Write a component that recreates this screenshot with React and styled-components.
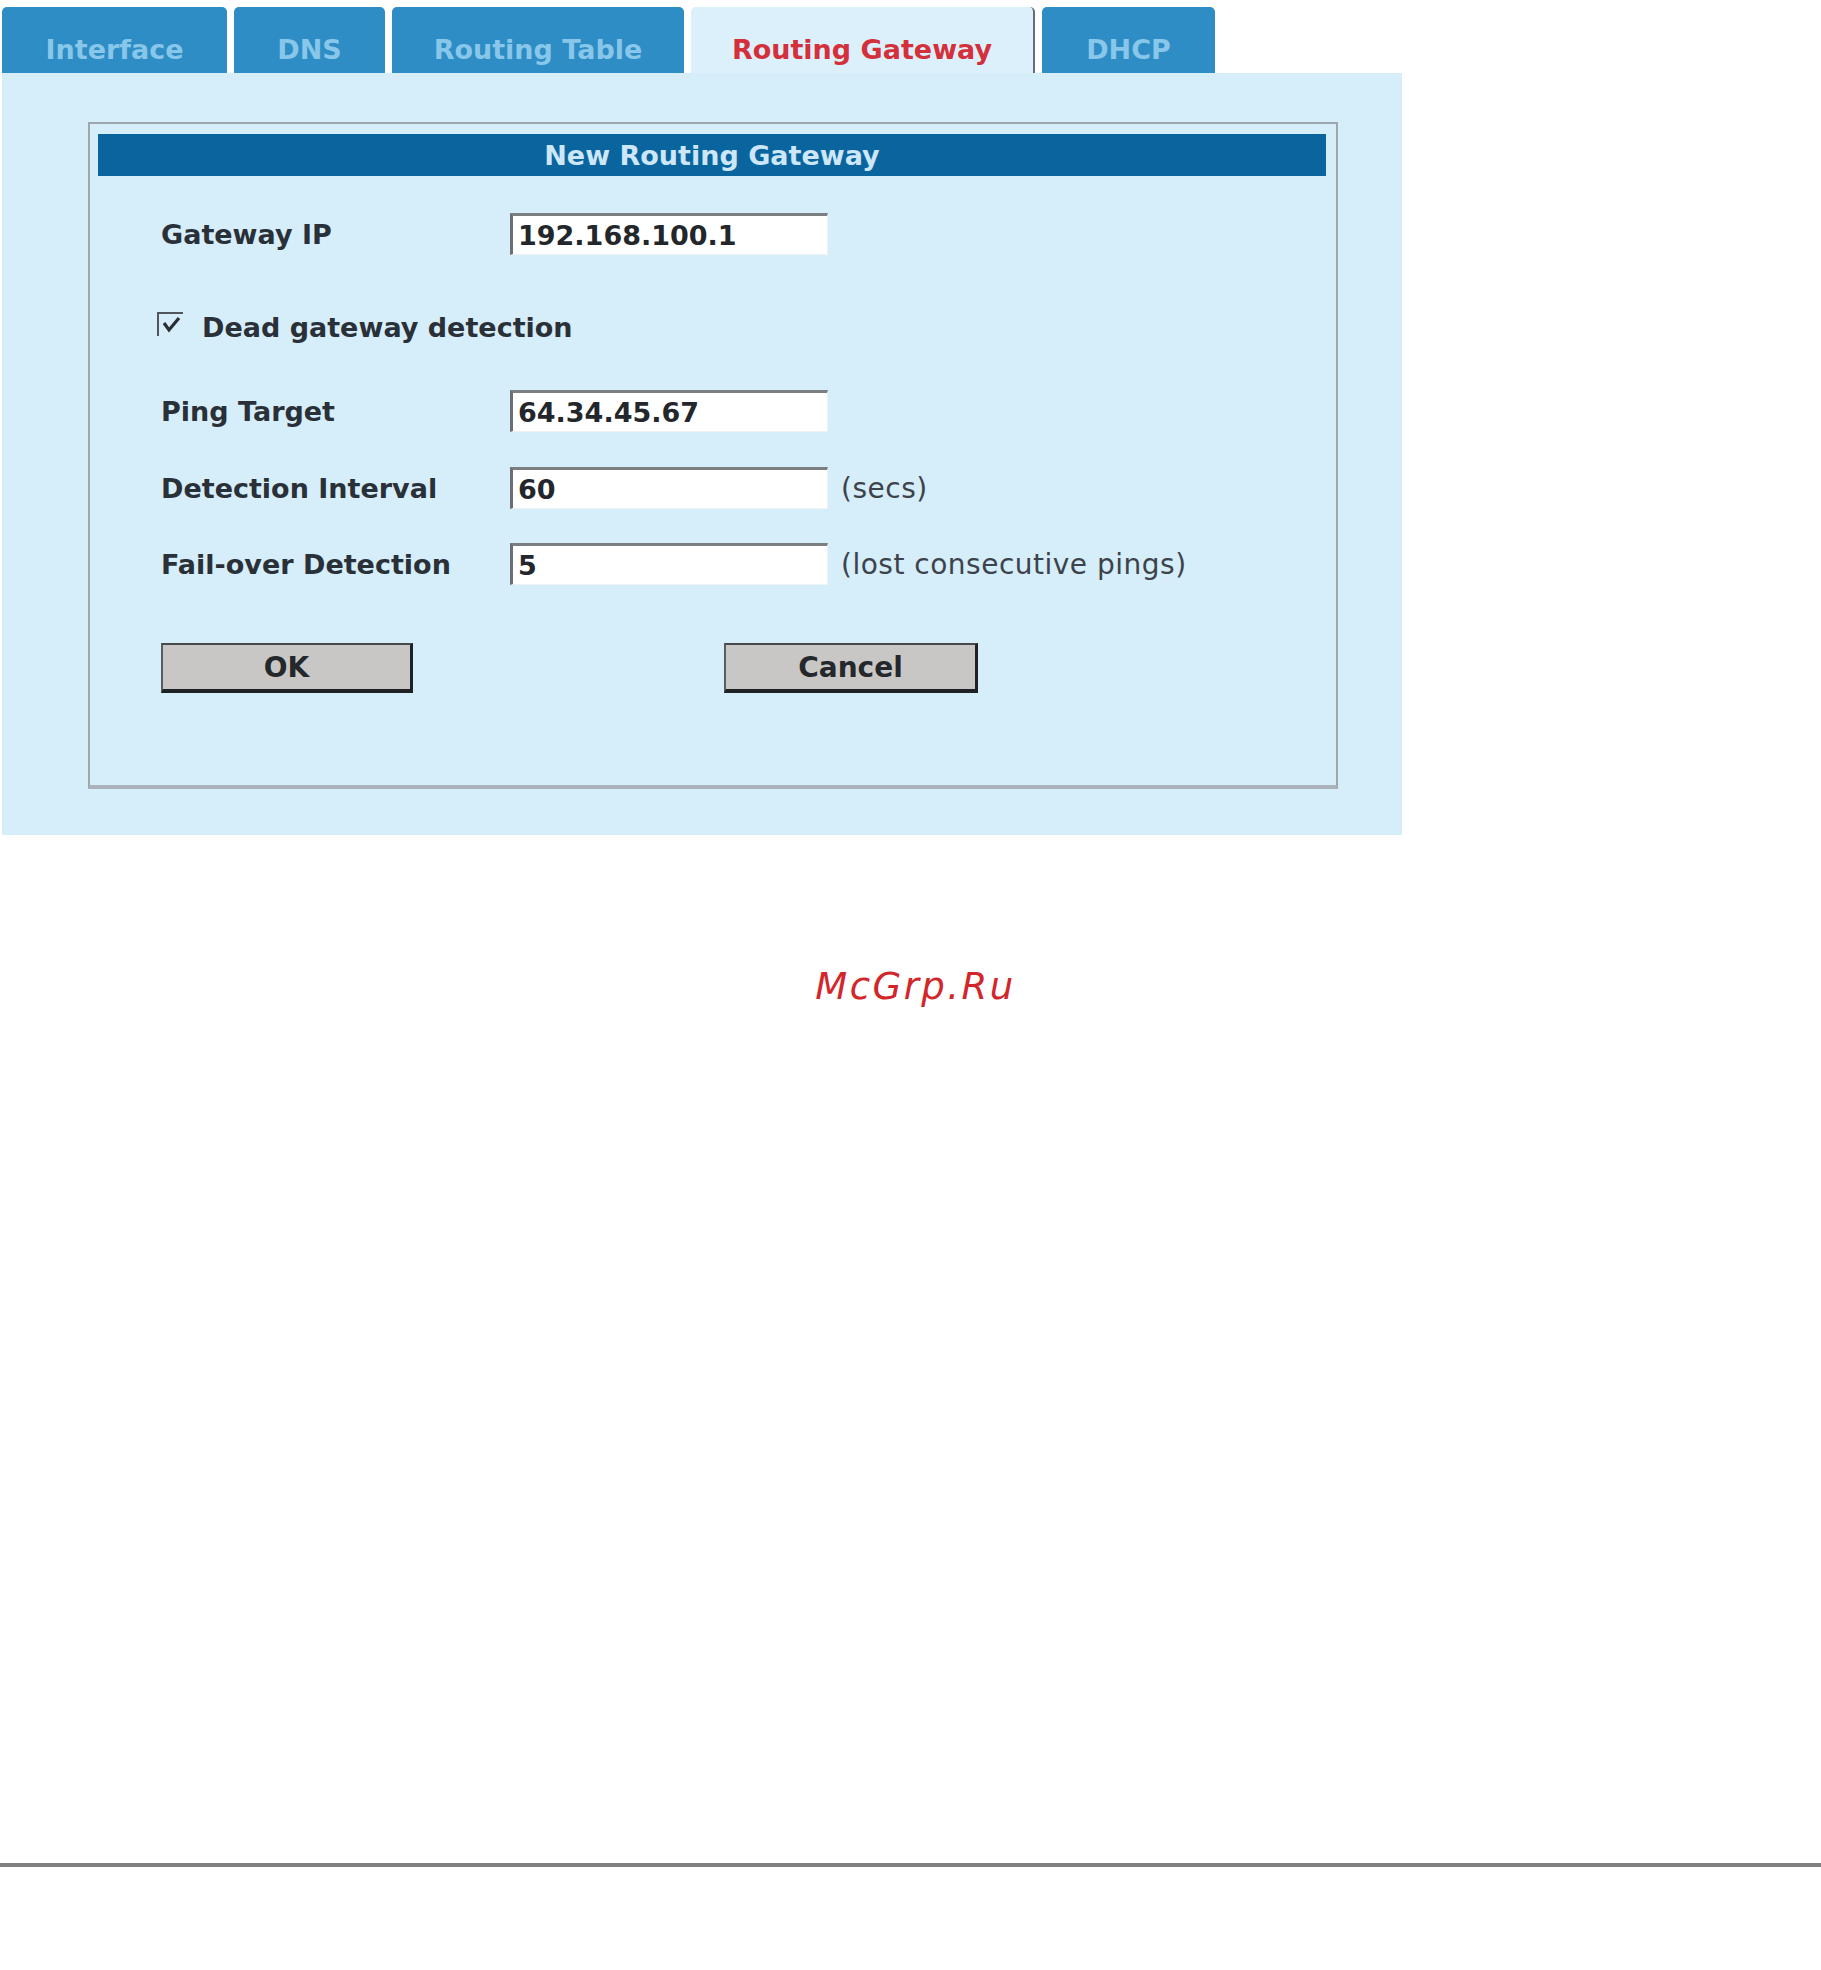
import React from 'react'
import styled, { createGlobalStyle } from 'styled-components'

const GlobalStyle = createGlobalStyle`
  body {
    margin: 0;
    background: #ffffff;
    font-family: "DejaVu Sans", Verdana, sans-serif;
  }
`

const tabs = [
  { label: 'Interface', width: 225 },
  { label: 'DNS', width: 151 },
  { label: 'Routing Table', width: 292 },
  { label: 'Routing Gateway', width: 344, active: true },
  { label: 'DHCP', width: 173 },
]

const App = () => {
  return (
    <Page>
      <GlobalStyle />
      <Screen>
        <TabBar>
          {tabs.map((t) => (
            <Tab key={t.label} $width={t.width} $active={t.active}>
              {t.label}
            </Tab>
          ))}
        </TabBar>

        <Panel>
          <Box>
            <HeaderBar>New Routing Gateway</HeaderBar>
            <Form>
              <Row $top={37}>
                <Label>Gateway IP</Label>
                <Field defaultValue="192.168.100.1" />
              </Row>

              <CheckRow>
                <CheckBox>
                  <svg width="20" height="18" viewBox="0 0 20 18">
                    <path d="M3 7 L8 14 L18 2" fill="none" stroke="#2a2f36" strokeWidth="3.2" />
                  </svg>
                </CheckBox>
                <Label>Dead gateway detection</Label>
              </CheckRow>

              <Row $top={46}>
                <Label>Ping Target</Label>
                <Field defaultValue="64.34.45.67" />
              </Row>

              <Row $top={35}>
                <Label>Detection Interval</Label>
                <Field defaultValue="60" />
                <Hint>(secs)</Hint>
              </Row>

              <Row $top={34}>
                <Label>Fail-over Detection</Label>
                <Field defaultValue="5" />
                <Hint>(lost consecutive pings)</Hint>
              </Row>

              <ButtonRow>
                <Button $width={252}>OK</Button>
                <Button $width={254}>Cancel</Button>
              </ButtonRow>
            </Form>
          </Box>
        </Panel>
      </Screen>

      <Watermark>McGrp.Ru</Watermark>
      <Rule />
    </Page>
  )
}

const Page = styled.div`
  width: 1821px;
  min-height: 1970px;
  background: #ffffff;
  overflow: hidden;
`

const Screen = styled.div`
  width: 1400px;
  margin-left: 2px;
`

const TabBar = styled.div`
  display: flex;
  gap: 7px;
  padding-top: 7px;
`

const Tab = styled.div`
  width: ${(p) => p.$width}px;
  height: 66px;
  box-sizing: border-box;
  padding-top: 27px;
  display: flex;
  justify-content: center;
  border-radius: 5px 5px 0 0;
  font-size: 27px;
  font-weight: bold;
  line-height: 31px;
  white-space: nowrap;
  background: ${(p) => (p.$active ? '#dcf0fb' : '#2d8dc4')};
  color: ${(p) => (p.$active ? '#d3303c' : '#88c6ea')};
  border-right: ${(p) => (p.$active ? '2px solid #5e6e7c' : 'none')};
`

const Panel = styled.div`
  background: #d6edfa;
  padding: 49px 0 46px 86px;
`

const Box = styled.div`
  width: 1250px;
  height: 667px;
  box-sizing: border-box;
  border: 2px solid #9ea7ae;
  border-bottom: 4px solid #aab3ba;
  padding: 10px 10px 0 8px;
`

const HeaderBar = styled.div`
  height: 42px;
  background: #0a659f;
  color: #cde7f8;
  font-size: 27px;
  font-weight: bold;
  display: flex;
  align-items: center;
  justify-content: center;
`

const Form = styled.div`
  display: flex;
  flex-direction: column;
  padding-left: 63px;
`

const Row = styled.div`
  display: flex;
  align-items: center;
  margin-top: ${(p) => p.$top}px;
  height: 42px;
`

const Label = styled.span`
  font-size: 27px;
  font-weight: bold;
  color: #2a3038;
  white-space: nowrap;
  ${Row} & {
    width: 349px;
  }
`

const Field = styled.input`
  width: 318px;
  height: 42px;
  box-sizing: border-box;
  border: none;
  border-top: 3px solid #7c7f82;
  border-left: 3px solid #6c6f72;
  border-right: 1px solid #eef2f4;
  border-bottom: 1px solid #eef2f4;
  background: #ffffff;
  padding: 0 0 0 5px;
  font-family: "DejaVu Sans", Verdana, sans-serif;
  font-size: 27px;
  font-weight: bold;
  color: #23272c;
  outline: none;
`

const Hint = styled.span`
  margin-left: 13px;
  font-size: 28px;
  color: #3c434b;
  white-space: nowrap;
  letter-spacing: 0.5px;
`

const CheckRow = styled.div`
  display: flex;
  align-items: center;
  gap: 19px;
  margin-top: 55px;
  margin-left: -4px;
  height: 34px;
`

const CheckBox = styled.span`
  width: 26px;
  height: 24px;
  box-sizing: border-box;
  margin-top: -6px;
  border-top: 2px solid #50565c;
  border-left: 2px solid #50565c;
  display: flex;
  align-items: center;
  justify-content: center;
`

const ButtonRow = styled.div`
  display: flex;
  gap: 311px;
  margin-top: 58px;
`

const Button = styled.button`
  width: ${(p) => p.$width}px;
  height: 50px;
  box-sizing: border-box;
  background: #c9c7c5;
  border-top: 2px solid #46494c;
  border-left: 2px solid #5a5d60;
  border-right: 3px solid #1f2224;
  border-bottom: 4px solid #1f2224;
  font-family: "DejaVu Sans", Verdana, sans-serif;
  font-size: 28px;
  font-weight: bold;
  color: #24282c;
  padding: 0;
`

const Watermark = styled.div`
  margin-top: 130px;
  padding-left: 10px;
  text-align: center;
  font-family: "DejaVu Sans", sans-serif;
  font-style: italic;
  font-size: 37px;
  line-height: 43px;
  letter-spacing: 2.5px;
  color: #d2262a;
`

const Rule = styled.div`
  margin-top: 855px;
  height: 4px;
  background: #808080;
`

export default App
